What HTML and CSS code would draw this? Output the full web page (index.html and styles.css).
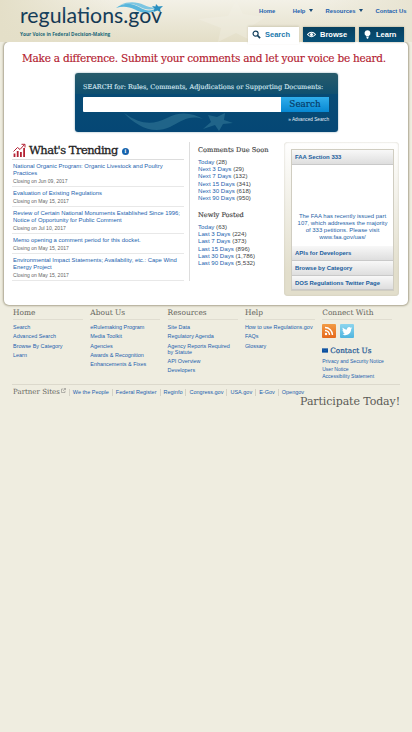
FILE: index.html
```html
<!DOCTYPE html>
<html lang="en">
<head>
<meta charset="utf-8">
<title>Regulations.gov</title>
<link rel="stylesheet" href="styles.css">
</head>
<body>
<header class="top">
  <svg class="star-bg" viewBox="0 0 90 42"><path d="M38 0 45 14 68 17 52 27 56 42 38 33 20 42 23 28 0 19 30 16Z"/></svg>
  <div class="brand">
    <svg class="logo" viewBox="0 0 150 30" width="150" height="30">
      <defs><linearGradient id="lg" x1="0" x2="0" y1="0" y2="1"><stop offset="0" stop-color="#2a6689"/><stop offset=".6" stop-color="#123752"/></linearGradient></defs>
      <path d="M96 8C104 2 112 3 119 7C127 12 132 11 139 7C132 15 123 14 115 9.500C108 6 102 6 96 8Z" fill="#58b6dc"/>
      <path d="M100 5C109 1 117 2 124 5C130 8 134 8 139 6C132 11 126 10 119 6.500C113 3.500 107 3.500 100 5Z" fill="#7cc6e2"/>
      <path d="M136 4 138.500 6.500 143 6 140 9 141 12.500 137.500 10.500 133.500 12 134.500 8.500 132 6 135.500 6.500Z" fill="#2a8fc0"/>
      <text x="0" y="23" textLength="142" lengthAdjust="spacingAndGlyphs" fill="url(#lg)">regulations.gov</text>
    </svg>
    <div class="tagline">Your Voice in Federal Decision-Making</div>
  </div>
  <div class="navs">
    <nav class="util"><a>Home</a><a class="help">Help <i></i></a><a class="res">Resources <i></i></a><a class="res">Contact Us</a></nav>
    <nav class="tabs">
      <a class="tab active"><svg viewBox="0 0 10 10"><circle cx="4" cy="4" r="2.800" fill="none" stroke="currentColor" stroke-width="1.300"/><path d="M6 6 9 9" stroke="currentColor" stroke-width="1.800"/></svg>Search</a>
      <a class="tab browse"><svg viewBox="0 0 10 10"><path d="M.5 5Q5 0 9.500 5Q5 10 .5 5Z" fill="none" stroke="currentColor" stroke-width="1.200"/><circle cx="5" cy="5" r="1.700" fill="currentColor"/></svg>Browse</a>
      <a class="tab learn"><svg viewBox="0 0 10 10"><path d="M5 .2A3.400 3.400 0 0 1 6.500 6.600V7.300H3.500V6.600A3.400 3.400 0 0 1 5 .2ZM3.700 7.900H6.300L5.600 9.600H4.400Z" fill="currentColor"/></svg>Learn</a>
    </nav>
  </div>
</header>

<main class="card">
  <h1>Make a difference. Submit your comments and let your voice be heard.</h1>
  <section class="search">
    <svg class="swoosh" viewBox="0 0 120 18"><path d="M0 0C17 12 29 12 43 5C56-2 69 0 79 6C65 2 60 7 46 14C29 22 12 13 0 0Z"/><path d="M84 2 93 4 101 0 100 7 109 10 99 11 95 18 91 12 79 16 87 9Z"/></svg>
    <label>SEARCH for: Rules, Comments, Adjudications or Supporting Documents:</label>
    <div class="field"><div class="input"></div><div class="go"><span>Search</span></div></div>
    <a class="adv">» Advanced Search</a>
  </section>
  <div class="cols">
    <section class="trend">
      <h2><svg viewBox="0 0 13 14"><path d="M1.500 14V10.500M4.700 14V8M7.900 14V9M11.100 14V5" stroke="#b42234" stroke-width="1.800"/><path d="M.5 8.500 4.500 4.500 7 6.500 11.500 1.500M8.500 1.300H12V4.500" fill="none" stroke="#b42234" stroke-width="1"/></svg><span>What's Trending</span><b class="info">i</b></h2>
      <ul>
        <li><a>National Organic Program: Organic Livestock and Poultry<br>Practices</a><small>Closing on Jun 09, 2017</small></li>
        <li><a>Evaluation of Existing Regulations</a><small>Closing on May 15, 2017</small></li>
        <li><a>Review of Certain National Monuments Established Since 1996;<br>Notice of Opportunity for Public Comment</a><small>Closing on Jul 10, 2017</small></li>
        <li><a>Memo opening a comment period for this docket.</a><small>Closing on May 15, 2017</small></li>
        <li><a>Environmental Impact Statements; Availability, etc.: Cape Wind<br>Energy Project</a><small>Closing on May 15, 2017</small></li>
      </ul>
    </section>
    <section class="counts">
      <h3>Comments Due Soon</h3>
      <p><a>Today</a> (28)<br><a>Next 3 Days</a> (29)<br><a>Next 7 Days</a> (132)<br><a>Next 15 Days</a> (341)<br><a>Next 30 Days</a> (618)<br><a>Next 90 Days</a> (950)</p>
      <h3 class="posted">Newly Posted</h3>
      <p><a>Today</a> (63)<br><a>Last 3 Days</a> (224)<br><a>Last 7 Days</a> (373)<br><a>Last 15 Days</a> (896)<br><a>Last 30 Days</a> (1,786)<br><a>Last 90 Days</a> (5,532)</p>
    </section>
    <aside class="side">
      <div class="acc">
        <div class="bar first">FAA Section 333</div>
        <div class="panel">The FAA has recently issued part<br>107, which addresses the majority<br>of 333 petitions. Please visit<br>www.faa.gov/uas/</div>
        <div class="bar">APIs for Developers</div>
        <div class="bar">Browse by Category</div>
        <div class="bar">DOS Regulations Twitter Page</div>
      </div>
    </aside>
  </div>
</main>

<footer>
  <div class="fcols">
    <div><h4>Home</h4><a>Search</a><a>Advanced Search</a><a>Browse By Category</a><a>Learn</a></div>
    <div><h4>About Us</h4><a>eRulemaking Program</a><a>Media Toolkit</a><a>Agencies</a><a>Awards &amp; Recognition</a><a>Enhancements &amp; Fixes</a></div>
    <div><h4>Resources</h4><a>Site Data</a><a>Regulatory Agenda</a><a>Agency Reports Required<br>by Statute</a><a>API Overview</a><a>Developers</a></div>
    <div><h4>Help</h4><a>How to use Regulations.gov</a><a>FAQs</a><a>Glossary</a></div>
    <div class="connect"><h4>Connect With</h4>
      <div class="social">
        <svg class="rss" viewBox="0 0 14 14"><circle cx="4" cy="10" r="1.200" fill="#fff"/><path d="M3 6.500A4.500 4.500 0 0 1 7.500 11M3 3.500A7.500 7.500 0 0 1 10.500 11" fill="none" stroke="#fff" stroke-width="1.400"/></svg>
        <svg class="tw" viewBox="0 0 14 14"><path d="M2.800 3.500C4 5 5.500 5.500 7 5.500C6.800 3 9.500 2.300 10.700 3.800L12.200 3.400L11.200 5C11.200 9 8 11.500 4.500 11.200L2.300 10.400C3.500 10.500 4.400 10.200 5 9.600C4 9.500 3.400 9 3.100 8.200H4C3 7.700 2.500 7 2.500 6L3.300 6.200C2.500 5.500 2.300 4.500 2.800 3.500Z" fill="#fff"/></svg>
      </div>
      <h5><svg viewBox="0 0 7 5"><path d="M0 0H7V5H0Z" fill="#0b50a0"/><path d="M0 .5 3.500 3 7 .5" fill="none" stroke="#4d80bb" stroke-width=".4"/></svg>Contact Us</h5>
      <a>Privacy and Security Notice</a><a>User Notice</a><a>Accessibility Statement</a>
    </div>
  </div>
  <div class="partners">
    <h4>Partner Sites</h4><svg class="ext" viewBox="0 0 6 6"><path d="M3 1.200H.6V5.400H4.800V3.300M2.500 3.500 5.200.8M3.600.6H5.400V2.400" fill="none" stroke="#777" stroke-width=".6"/></svg>
    <a>We the People</a><a>Federal Register</a><a>Reginfo</a><a>Congress.gov</a><a>USA.gov</a><a>E-Gov</a><a>Opengov</a>
  </div>
  <div class="participate">Participate Today!</div>
</footer>
</body>
</html>
```
FILE: styles.css
```css
* { box-sizing: border-box; }
html, body { margin: 0; height: 732px; overflow: hidden; }
body { background: #efede0; font-family: "Liberation Sans", Arial, sans-serif; color: #444; font-size: 6px; }
a { color: #1b5fae; }
h1, h2, h3, h4, h5, p, ul { margin: 0; padding: 0; font-weight: normal; }
h1, h2, h3, h4, h5, label, .go, .participate { font-family: "DejaVu Serif", serif; white-space: nowrap; }

.top { position: relative; height: 42px; display: flex; justify-content: space-between; padding: 0 8px 0 20px; background: linear-gradient(90deg, #e4dfc8, rgba(228,223,200,0) 30%, rgba(228,223,200,0) 75%, #e8e4d2), linear-gradient(#f3f1e7, #e3dec7); }
.star-bg { position: absolute; left: 198px; top: 0; width: 90px; height: 42px; fill: #f4f2e8; opacity: .35; }
.brand { position: relative; width: 150px; }
.logo { display: block; }
.logo text { font: 22px Lato, sans-serif; }
.tagline { font: bold 4.750px/7px "Open Sans", sans-serif; color: #236978; white-space: nowrap; padding-top: .5px; }
.navs { position: relative; z-index: 2; display: flex; flex-direction: column; justify-content: space-between; width: 156px; }
.util { display: flex; padding: 7px 0 0; margin-left: 11px; font-weight: bold; font-size: 5.850px; line-height: 8px; white-space: nowrap; }
.util .help { margin-left: 17.500px; }
.util .res { margin-left: 13px; }
.util i { display: inline-block; border: 2px solid transparent; border-top: 3px solid #174a76; border-bottom: 0; margin-left: 1.500px; vertical-align: 1px; }
.tabs { display: flex; gap: 4px; }
.tab { height: 15px; display: flex; align-items: center; gap: 4px; padding-left: 4px; background: linear-gradient(#07405f, #075078); color: #fff; font-weight: bold; font-size: 7.500px; box-shadow: 0 0 2px #aaa58d; }
.tab svg { width: 9px; height: 9px; }
.tab.active { width: 51px; background: #fff; color: #1b79ad; position: relative; height: 17px; margin: 0 0 -2px; padding-bottom: 2px; z-index: 2; box-shadow: 0 -1px 2px #cfcab5; }
.tab.active svg { color: #123f5c; }
.browse { width: 52px; }
.learn { width: 45px; }

.card { margin: 0 8px 0 4px; width: 404px; height: 263px; background: #fff; border-radius: 5px; box-shadow: 0 0 2px 1px #aaa58f; padding: 8px 8px 0; }
h1 { height: 15px; line-height: 16px; font-size: 10.500px; letter-spacing: -.23px; color: #b3202f; text-align: center; padding-right: 4px; -webkit-text-stroke: .15px #b3202f; }
.search { position: relative; width: 263px; height: 59px; margin: 8px auto 0 63px; padding: 9px 9px 0 8px; border-radius: 3px; background: linear-gradient(#285b6b, #10506f 35%, #074b75 36%, #054775); box-shadow: 0 0 2px #7da0af; color: #d5e6ee; }
.swoosh { position: absolute; left: 49px; top: 40px; width: 120px; height: 18px; fill: #276c8e; opacity: .8; }
label { display: block; height: 10px; line-height: 10px; font-size: 6.470px; -webkit-text-stroke: .15px #d5e6ee; }
.field { display: flex; height: 15px; margin-top: 5px; }
.input { flex: 1; background: #fff; border-radius: 1px 0 0 1px; }
.go { width: 48px; background: linear-gradient(#31aeec, #0788d2); color: #073c67; font-size: 8.800px; line-height: 15px; text-align: center; -webkit-text-stroke: .2px #073c67; }
.adv { display: block; text-align: right; color: #e6eff5; font-size: 4.700px; line-height: 6px; margin-top: 5px; }

.cols { display: flex; margin-top: 10px; }
.trend { width: 178px; height: 139px; border-right: 1px solid #ddd; padding-right: 5px; }
.trend h2 { display: flex; align-items: center; height: 18px; color: #222; font-size: 11.500px; border-bottom: 1px solid #ddd; padding-bottom: 1px; }
.trend h2 svg { width: 13px; height: 14px; margin: 0 3px 0 1px; }
.trend h2 span { letter-spacing: -.52px; -webkit-text-stroke: .3px #222; }
.info { width: 7px; height: 7px; border-radius: 50%; background: #1663ad; color: #fff; font: bold 6px/7px "Liberation Serif", serif; text-align: center; margin: 3px 0 0 4px; }
.trend ul { list-style: none; }
.trend li { padding: 2.900px 0 .8px 1px; border-bottom: 1px solid #e8e8e8; }
.trend li a { display: block; line-height: 7.200px; font-size: 5.900px; white-space: nowrap; }
.trend li small { display: block; font-size: 5.050px; line-height: 8px; color: #666; }
.counts { width: 94px; padding-left: 8px; }
h3 { font-size: 6.650px; line-height: 10px; color: #444; margin-top: 3px; -webkit-text-stroke: .15px #444; }
.counts p { font-size: 6.150px; line-height: 7.200px; margin-top: 3px; white-space: nowrap; }
.posted { margin-top: 8.800px; }
.side { width: 115px; height: 154px; padding: 7px 5px 0 7px; border-radius: 4px; background: linear-gradient(#fff, #e2decb 85%); box-shadow: inset 0 0 2px #c9c6b7; }
.acc { border: 1px solid #d0cdc1; background: #fff; width: 103px; }
.bar { height: 14.700px; line-height: 14px; padding-left: 3px; background: linear-gradient(#f8f8f8, #dedede); border-bottom: 1px solid #c9c9c9; color: #205d9d; font-weight: bold; font-size: 5.950px; white-space: nowrap; }
.panel { height: 81.500px; padding-top: 48px; text-align: center; color: #2765a8; font-size: 5.950px; line-height: 7.200px; white-space: nowrap; }

footer { padding: 1px 12px 0; }
.fcols { display: grid; grid-template-columns: repeat(5, 77.300px); height: 80px; }
h4 { color: #66665e; font-size: 7.450px; line-height: 13px; height: 14px; }
.fcols > div { padding-left: 1px; }
.fcols h4 { border-bottom: 1px solid #e0ddd0; width: 70px; margin-bottom: 2.500px; }
.fcols a { display: block; font-size: 5.450px; line-height: 6.200px; padding: 1.550px 0; white-space: nowrap; }
.social { display: flex; gap: 4px; height: 15px; padding-top: 1px; }
.social svg { width: 14px; height: 14px; border-radius: 1px; }
.rss { background: linear-gradient(#f29b45, #e5681b); }
.tw { background: linear-gradient(#8cd5ee, #50b5df); }
h5 { display: flex; align-items: center; color: #1c5794; font-size: 7.300px; line-height: 10px; margin: 8px 0 2px; -webkit-text-stroke: .2px #1c5794; }
h5 svg { width: 6px; height: 5px; margin-right: 2px; }
.fcols .connect a { font-size: 5.050px; line-height: 6.500px; padding: .5px 0; }
.partners { display: flex; align-items: center; height: 13px; border-top: 1px solid #dcd9cc; margin-top: -2px; padding: 1px 0 0 1px; white-space: nowrap; }
.partners h4 { font-size: 7.050px; line-height: 11px; height: 12px; }
.ext { width: 5px; height: 5px; margin: 0 3px 2px 1px; }
.partners a { border-left: 1px solid #d5d2c6; padding: 0 3px; font-size: 5.500px; line-height: 7px; margin-top: 1px; }
.participate { text-align: right; font-size: 11px; letter-spacing: -.1px; line-height: 10px; margin-top: -.5px; color: #5c5c57; }
```
